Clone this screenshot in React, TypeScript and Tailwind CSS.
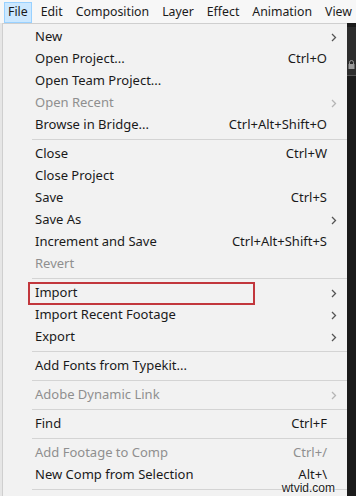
import React from "react";

type Item =
  | { sep: true }
  | {
      sep?: false;
      label: string;
      shortcut?: string;
      sub?: boolean;
      disabled?: boolean;
    };

const MENUBAR = ["File", "Edit", "Composition", "Layer", "Effect", "Animation", "View"];

const ITEMS: Item[] = [
  { label: "New", sub: true },
  { label: "Open Project...", shortcut: "Ctrl+O" },
  { label: "Open Team Project..." },
  { label: "Open Recent", sub: true, disabled: true },
  { label: "Browse in Bridge...", shortcut: "Ctrl+Alt+Shift+O" },
  { sep: true },
  { label: "Close", shortcut: "Ctrl+W" },
  { label: "Close Project" },
  { label: "Save", shortcut: "Ctrl+S" },
  { label: "Save As", sub: true },
  { label: "Increment and Save", shortcut: "Ctrl+Alt+Shift+S" },
  { label: "Revert", disabled: true },
  { sep: true },
  { label: "Import", sub: true },
  { label: "Import Recent Footage", sub: true },
  { label: "Export", sub: true },
  { sep: true },
  { label: "Add Fonts from Typekit..." },
  { sep: true },
  { label: "Adobe Dynamic Link", sub: true, disabled: true },
  { sep: true },
  { label: "Find", shortcut: "Ctrl+F" },
  { sep: true },
  { label: "Add Footage to Comp", shortcut: "Ctrl+/", disabled: true },
  { label: "New Comp from Selection", shortcut: "Alt+\\" },
  { sep: true },
];

function Chevron({ dim }: { dim?: boolean }) {
  return (
    <svg width="6" height="9" viewBox="0 0 6 9" className="shrink-0">
      <path
        d="M1 1 L4.5 4.5 L1 8"
        fill="none"
        stroke={dim ? "#b5b5b5" : "#555"}
        strokeWidth="1.3"
      />
    </svg>
  );
}

export default function App() {
  return (
    <div
      className="w-[356px] h-[496px] overflow-hidden flex flex-col bg-[#f3f3f3] text-[13px] text-[#1a1a1a]"
      style={{ fontFamily: '"Noto Sans", "Open Sans", sans-serif' }}
    >
      {/* Menu bar */}
      <div className="h-[23px] shrink-0 flex items-stretch pl-[4px] pt-[2px] bg-[#f7f7f7] whitespace-nowrap text-[12.3px]">
        {MENUBAR.map((m, i) => (
          <div
            key={m}
            className={`flex items-center px-[3px] mr-[5px] leading-none ${
              i === 0 ? "bg-[#cce8ff] border border-[#99d1ff]" : "border border-transparent"
            }`}
          >
            {m}
          </div>
        ))}
      </div>

      <div className="flex-1 flex min-h-0">
        <div className="w-[2px] bg-[#e6e6e6]" />

        {/* Dropdown */}
        <div className="flex-1 bg-[#f2f2f2] border-l border-t border-[#cfcfcf] pt-[2px] pr-[10px] relative">
          {ITEMS.map((it, i) =>
            it.sep ? (
              <div key={i} className="h-[7px] flex items-center pl-[29px] -mr-[10px]">
                <div className="h-px w-full bg-[#d4d4d4]" />
              </div>
            ) : (
              <div
                key={i}
                className={`h-[22px] flex items-center pl-[32px] ${
                  it.disabled ? "text-[#8f8f8f]" : ""
                }`}
              >
                <span className="flex-1 whitespace-nowrap">{it.label}</span>
                {it.shortcut && <span className="whitespace-nowrap mr-[4px]">{it.shortcut}</span>}
                <span className="w-[6px] flex justify-end">
                  {it.sub && <Chevron dim={it.disabled} />}
                </span>
              </div>
            )
          )}
          {/* highlight box around Import */}
          <div className="absolute left-[25px] top-[258px] w-[227px] h-[23px] border-2 border-[#c2373d] pointer-events-none" />
          <div
            className="absolute right-[12px] bottom-[2px] text-[12px] text-[#222] leading-none [text-shadow:0_0_2px_#fff,0_0_2px_#fff]"
            style={{ fontFamily: '"Liberation Sans", Arial, sans-serif' }}
          >
            wtvid.com
          </div>
        </div>

        {/* Dark app strip */}
        <div className="w-[9px] bg-[#1b1b1b] flex flex-col">
          <div className="h-[4px]" />
          <div className="h-[48px] bg-[#2c2c2c] flex flex-col justify-end items-center pb-[6px]">
            <svg width="7" height="9" viewBox="0 0 7 9">
              <rect x="0.5" y="4" width="6" height="5" fill="#9a9a9a" />
              <path d="M1.5 4 V2.5 a2 2 0 0 1 4 0 V4" fill="none" stroke="#9a9a9a" />
            </svg>
          </div>
          <div className="h-px bg-[#555]" />
        </div>
      </div>
    </div>
  );
}
